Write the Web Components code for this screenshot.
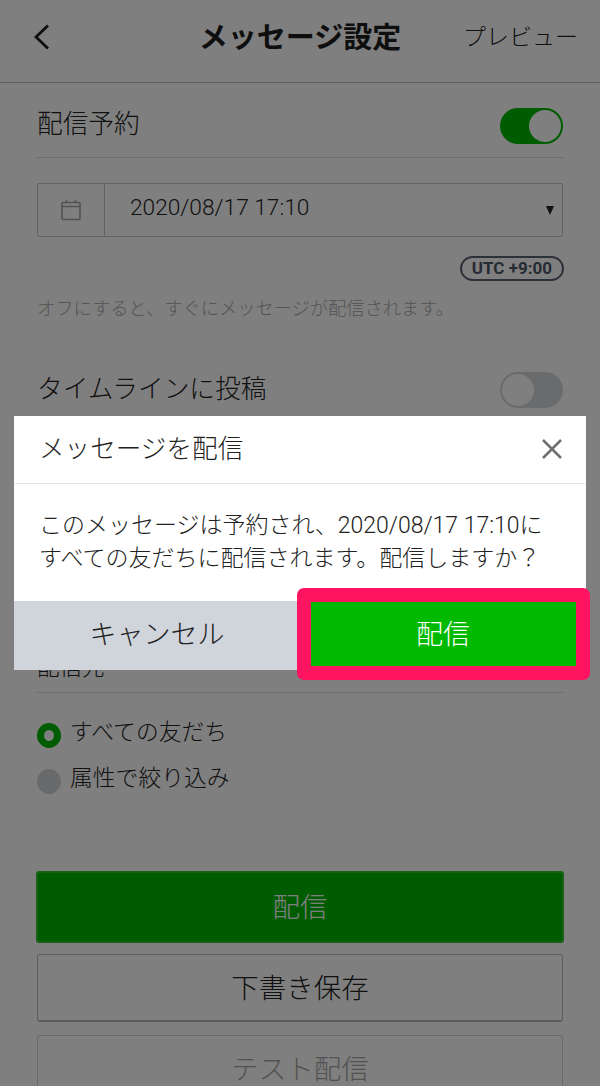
<!DOCTYPE html>
<html lang="ja"><head><meta charset="utf-8"><title>メッセージ設定</title>
<style>
html,body{margin:0;padding:0;background:#fff}
body{width:600px;height:1086px;overflow:hidden;position:relative;font-family:Roboto,"Noto Sans CJK JP",sans-serif;font-weight:300;color:#1e1e1e}
</style></head><body>
<app-header title="メッセージ設定" action="プレビュー"></app-header>
<main-page>
  <setting-row label="配信予約" on></setting-row>
  <date-field value="2020/08/17 17:10"></date-field>
  <tz-pill>UTC +9:00</tz-pill>
  <hint-text>オフにすると、すぐにメッセージが配信されます。</hint-text>
  <setting-row label="タイムラインに投稿" plain></setting-row>
  <section-title>配信先</section-title>
  <radio-item checked>すべての友だち</radio-item>
  <radio-item>属性で絞り込み</radio-item>
  <action-button kind="primary">配信</action-button>
  <action-button>下書き保存</action-button>
  <action-button kind="disabled">テスト配信</action-button>
</main-page>
<dim-overlay></dim-overlay>
<confirm-dialog heading="メッセージを配信" cancel="キャンセル" ok="配信">
このメッセージは予約され、2020/08/17 17:10に<br>すべての友だちに配信されます。配信しますか？
</confirm-dialog>
<script>
function def(name,html){
  customElements.define(name,class extends HTMLElement{
    connectedCallback(){
      if(this.shadowRoot)return;
      const r=this.attachShadow({mode:'open'});
      r.innerHTML=typeof html==='function'?html(this):html;
    }
  });
}
def('app-header',e=>`<style>
:host{display:grid;grid-template-columns:1fr auto 1fr;align-items:center;height:82px;border-bottom:1px solid #bbb;padding:0 23px 0 31px}
.t{font-size:29px;font-weight:700;line-height:1;color:#1c1c1c;margin:0 8px 6px 0}
.a{justify-self:end;font-size:23px;color:#222;margin-bottom:8px;line-height:1;margin-right:-1px}
svg{display:block;margin-bottom:8px}
</style>
<svg width="22" height="28" viewBox="0 0 22 28"><path d="M17 2.500 L5 14 L17 25.500" fill="none" stroke="#1c1c1c" stroke-width="2.800"/></svg>
<div class="t">${e.getAttribute('title')}</div><div class="a">${e.getAttribute('action')}</div>`);
def('main-page',`<style>:host{display:block;padding:0 37px}</style><slot></slot>`);
def('toggle-switch',e=>`<style>
:host{width:63px;height:36px;border-radius:18px;box-sizing:border-box;background:${e.hasAttribute('on')?'#00b900':'#d4d6da'};flex:none;display:flex;justify-content:${e.hasAttribute('on')?'flex-end':'flex-start'};padding:2px}
i{display:block;width:32px;height:32px;border-radius:50%;background:#fff}
</style><i></i>`);
def('setting-row',e=>`<style>
:host{display:flex;justify-content:space-between;${e.hasAttribute('plain')?'height:66px;margin-top:36px;align-items:center':'border-bottom:1px solid #d8d8d8;align-items:flex-start;padding-top:25px;box-sizing:border-box;height:75px'}}
span{font-size:25.700px;color:#222;line-height:32px;${e.hasAttribute('plain')?'padding-bottom:2px':''}}
</style><span>${e.getAttribute('label')}</span><toggle-switch ${e.hasAttribute('on')?'on':''}></toggle-switch>`);
def('date-field',e=>`<style>
:host{display:flex;height:54px;margin-top:25px;border:1px solid #c4c4c4;box-sizing:border-box;border-radius:2px;align-items:stretch}
.i{width:66px;border-right:1px solid #c4c4c4;display:flex;align-items:center;justify-content:center;flex:none}
.v{flex:1;display:flex;align-items:center;padding-left:25px;font-size:22.700px;color:#222;padding-bottom:6px;box-sizing:border-box}
.c{width:16px;flex:none;display:flex;align-items:center}
.c b{display:block;width:0;height:0;border:4px solid transparent;border-top:9px solid #222;border-bottom:0;margin-top:1px}
</style><div class="i"><svg width="20" height="22" viewBox="0 0 20 22" fill="none" stroke="#a3a3a3" stroke-width="1.600"><rect x="1" y="3.500" width="18" height="17" rx="1"/><path d="M1 7.500H19M5.500 1V3.500M14.500 1V3.500"/></svg></div>
<div class="v">${e.getAttribute('value')}</div><div class="c"><b></b></div>`);
def('tz-pill',`<style>
:host{display:block;width:fit-content;margin:19px -1px 0 auto;border:2px solid #5a6272;border-radius:13px;height:25px;box-sizing:border-box;padding:0 10px;font-size:17px;font-weight:700;line-height:20px;color:#4d5565}
</style><slot></slot>`);
def('hint-text',`<style>
:host{display:block;margin-top:16px;font-size:18.250px;line-height:24px;color:#a8a8a8;white-space:nowrap}
</style><slot></slot>`);
def('section-title',`<style>
:host{display:block;margin:231px 0 19px;height:26px;border-bottom:1px solid #d8d8d8;padding-bottom:12px;font-size:22.500px;line-height:26px;color:#222}
</style><slot></slot>`);
def('radio-item',e=>`<style>
:host{display:flex;align-items:center;height:46px;gap:9px;font-size:22.800px;color:#222}
i{width:24px;height:25px;border-radius:50%;box-sizing:border-box;flex:none;${e.hasAttribute('checked')?'border:7px solid #00b900;background:#fff':'background:#d2d4d8'}}
span{padding-bottom:4px;line-height:32px}
</style><i></i><span><slot></slot></span>`);
def('action-button',e=>{const k=e.getAttribute('kind');
return `<style>
:host{display:flex;align-items:center;justify-content:center;box-sizing:border-box;font-size:27.500px;border-radius:3px;padding-bottom:4px;
${k==='primary'?'height:72px;margin:67px -1px 0;background:#00b900;color:#fff;border:2px solid #2ec32e':
  k==='disabled'?'height:67px;margin-top:13px;border:1px solid #d4d4d4;color:#a4a4a4':
  'height:68px;margin-top:11px;border:1px solid #bbb;border-bottom-width:2px;color:#222'}}
</style><slot></slot>`});
def('dim-overlay',`<style>:host{display:block;position:absolute;inset:0;background:rgba(0,0,0,.5)}</style>`);
def('confirm-dialog',e=>`<style>
:host{display:flex;flex-direction:column;position:absolute;left:14px;top:416px;width:572px;height:254px;background:#fff;color:#222}
header{height:68px;box-sizing:border-box;border-bottom:1px solid #e6e6e6;display:flex;align-items:center;justify-content:space-between;padding:0 23px 6px 25px;font-size:25.600px}
svg{display:block;margin-top:4px}
.b{flex:1;padding:25px 0 0 25px;font-size:23px;line-height:33px;white-space:nowrap}
footer{display:grid;grid-template-columns:1fr 1fr;height:69px}
footer div{display:flex;align-items:center;justify-content:center;font-size:27px;padding-bottom:6px}
.c{background:#d0d4db;color:#222}
.o{background:#00b900;color:#fff;position:relative}
.o::after{content:"";position:absolute;left:-3px;top:-13px;right:-4px;bottom:-10px;border:14px solid #ff1461;border-radius:7px}
</style>
<header><span>${e.getAttribute('heading')}</span><svg width="22" height="22" viewBox="0 0 22 22"><path d="M2 2L20 20M20 2L2 20" stroke="#6f6f6f" stroke-width="2.500" fill="none"/></svg></header>
<div class="b"><slot></slot></div>
<footer><div class="c">${e.getAttribute('cancel')}</div><div class="o">${e.getAttribute('ok')}</div></footer>`);
</script>
</body></html>
